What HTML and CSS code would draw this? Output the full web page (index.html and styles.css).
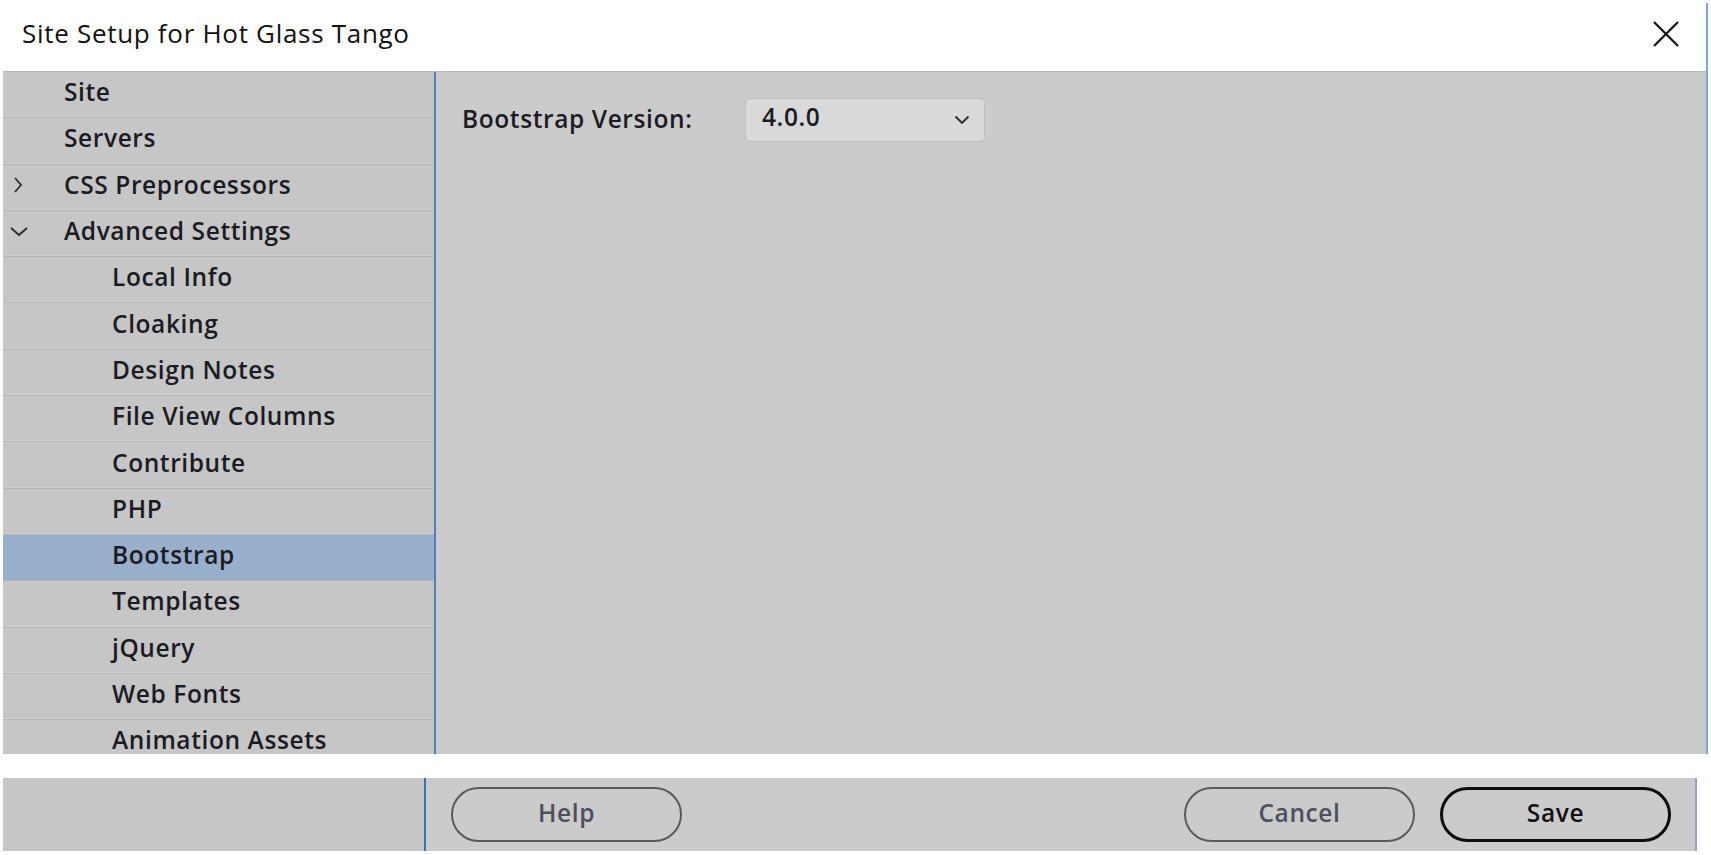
FILE: index.html
```html
<!DOCTYPE html>
<html>
<head>
<meta charset="utf-8">
<link rel="stylesheet" href="styles.css">
</head>
<body>
<div class="upper">
  <div class="titlebar">
    <div class="title">Site Setup for Hot Glass Tango</div>
    <svg class="close" width="28" height="28" viewBox="0 0 28 28"><path d="M2 2 L26 26 M26 2 L2 26" stroke="#111" stroke-width="2.2" fill="none"/></svg>
  </div>
  <div class="panel">
    <div class="sidebar">
      <div class="row">Site</div>
      <div class="row">Servers</div>
      <div class="row"><svg class="chev" width="20" height="20" viewBox="0 0 20 20"><path d="M6 3 L12 10 L6 17" stroke="#2a2a2a" stroke-width="1.8" fill="none"/></svg>CSS Preprocessors</div>
      <div class="row"><svg class="chev" width="20" height="20" viewBox="0 0 20 20"><path d="M2 7 L10 14 L18 7" stroke="#2a2a2a" stroke-width="1.8" fill="none"/></svg>Advanced Settings</div>
      <div class="row sub">Local Info</div>
      <div class="row sub">Cloaking</div>
      <div class="row sub">Design Notes</div>
      <div class="row sub">File View Columns</div>
      <div class="row sub">Contribute</div>
      <div class="row sub">PHP</div>
      <div class="row sub selected">Bootstrap</div>
      <div class="row sub">Templates</div>
      <div class="row sub">jQuery</div>
      <div class="row sub">Web Fonts</div>
      <div class="row sub">Animation Assets</div>
    </div>
    <div class="content">
      <div class="field">
        <span class="label">Bootstrap Version:</span>
        <div class="select">
          <span>4.0.0</span>
          <svg width="16" height="10" viewBox="0 0 16 10"><path d="M1.5 1.5 L8 8 L14.5 1.5" stroke="#2a2a2a" stroke-width="1.8" fill="none"/></svg>
        </div>
      </div>
    </div>
  </div>
</div>
<div class="footer">
  <div class="foot-left"></div>
  <div class="foot-right">
    <button class="btn">Help</button>
    <div class="spacer"></div>
    <button class="btn">Cancel</button>
    <button class="btn primary">Save</button>
  </div>
</div>
</body>
</html>
```
FILE: styles.css
```css
html, body {
  margin: 0;
  padding: 0;
  background: #ffffff;
}
body {
  width: 1711px;
  height: 855px;
  overflow: hidden;
  font-family: "Open Sans", "Noto Sans", sans-serif;
  color: #1b1b24;
}
.upper {
  width: 1708px;
  margin-top: 3px;
  border-right: 2px solid #7aa7d8;
  box-sizing: border-box;
}
.titlebar {
  height: 68px;
  display: flex;
  align-items: center;
  justify-content: space-between;
  padding: 0 26px 0 22px;
}
.title {
  font-size: 26px;
  letter-spacing: 0.7px;
  font-weight: 400;
  color: #111;
  margin-top: -9px;
}
.close {
  margin-top: -6px;
}
.panel {
  display: flex;
  height: 683px;
  margin-left: 3px;
  border-top: 1px solid #b9b9b9;
  box-sizing: border-box;
}
.sidebar {
  width: 431px;
  background: #c6c6c6;
  border-right: 2px solid #4f7fc0;
  overflow: hidden;
  flex: none;
}
.row {
  height: 46.3px;
  box-sizing: border-box;
  border-bottom: 1px solid #b6b6b6;
  box-shadow: inset 0 -1px 0 #d0d0d0;
  display: flex;
  align-items: center;
  padding-left: 61px;
  padding-bottom: 6px;
  font-size: 24.5px;
  letter-spacing: 0.6px;
  font-weight: 600;
  position: relative;
}
.row.sub {
  padding-left: 109px;
}
.row.selected {
  background: #98afcb;
  box-shadow: none;
}
.chev {
  position: absolute;
  left: 6px;
  top: 10px;
}
.content {
  flex: 1;
  background: #cbcbcb;
  padding: 26px 0 0 26px;
}
.field {
  display: flex;
  align-items: center;
}
.label {
  font-size: 24.5px;
  letter-spacing: 0.6px;
  font-weight: 600;
  width: 283px;
  margin-top: -4px;
}
.select {
  width: 240px;
  height: 44px;
  box-sizing: border-box;
  border: 1px solid #bdbdbd;
  border-radius: 5px;
  background: #d9d9d9;
  display: flex;
  align-items: center;
  justify-content: space-between;
  padding: 0 14px 0 16px;
  font-size: 24.5px;
  letter-spacing: 0.6px;
  font-weight: 600;
}
.select span {
  margin-top: -8px;
}
.footer {
  display: flex;
  margin: 24px 0 0 3px;
  width: 1694px;
  height: 73px;
  border-right: 2px solid #8ea7c9;
  box-sizing: border-box;
}
.foot-left {
  width: 421px;
  background: #c6c6c6;
  border-right: 2px solid #3f6fb5;
  flex: none;
}
.foot-right {
  flex: 1;
  background: #cbcbcb;
  display: flex;
  align-items: center;
  padding: 0 24px 0 25px;
  gap: 25px;
}
.spacer {
  flex: 1;
}
.btn {
  width: 231px;
  height: 55px;
  border-radius: 28px;
  border: 2px solid #5a5a5a;
  background: #cbcbcb;
  font-family: "Open Sans", "Noto Sans", sans-serif;
  font-size: 24.5px;
  letter-spacing: 0.6px;
  font-weight: 600;
  color: #4e4e5e;
  padding: 0 0 4px 0;
}
.btn.primary {
  border: 3px solid #0d0d0d;
  color: #111;
}
```
